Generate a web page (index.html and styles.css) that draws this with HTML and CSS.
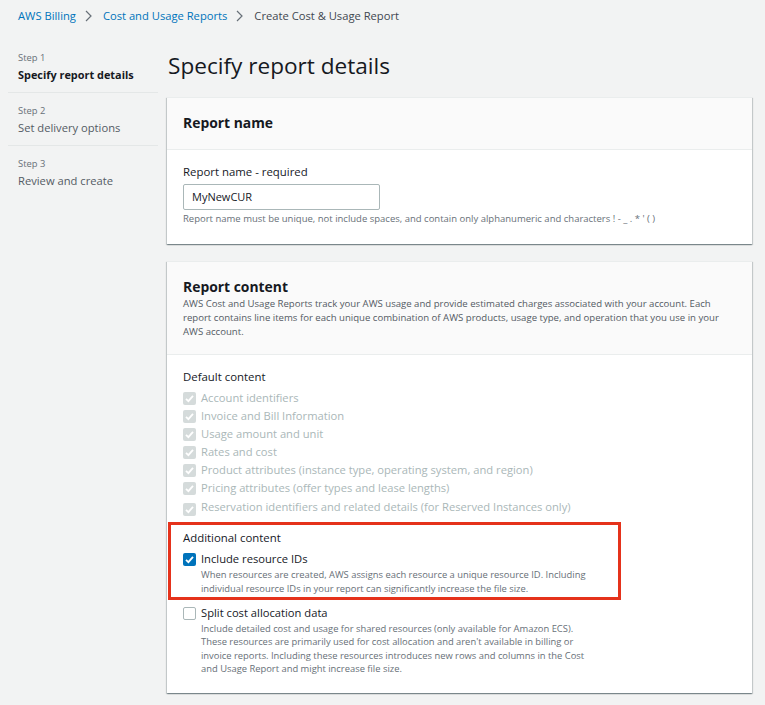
FILE: index.html
```html
<!DOCTYPE html>
<html>
<head>
<meta charset="utf-8">
<link rel="stylesheet" href="styles.css">
</head>
<body>
<nav class="crumbs">
  <a class="crumb-link">AWS Billing</a>
  <svg class="chev" width="7" height="12" viewBox="0 0 7 12"><polyline points="1,1 6,6 1,11" fill="none" stroke="#687078" stroke-width="1.2"/></svg>
  <a class="crumb-link">Cost and Usage Reports</a>
  <svg class="chev" width="7" height="12" viewBox="0 0 7 12"><polyline points="1,1 6,6 1,11" fill="none" stroke="#687078" stroke-width="1.2"/></svg>
  <span class="crumb-current">Create Cost &amp; Usage Report</span>
</nav>
<div class="layout">
  <aside class="steps">
    <div class="step">
      <div class="step-num">Step 1</div>
      <div class="step-name step-active">Specify report details</div>
    </div>
    <div class="step">
      <div class="step-num">Step 2</div>
      <div class="step-name">Set delivery options</div>
    </div>
    <div class="step step-last">
      <div class="step-num">Step 3</div>
      <div class="step-name">Review and create</div>
    </div>
  </aside>
  <main class="main">
    <h1 class="page-title">Specify report details</h1>

    <section class="card">
      <div class="card-head">
        <h2 class="card-title">Report name</h2>
      </div>
      <div class="card-body card-body-name">
        <div class="label">Report name - required</div>
        <div class="input">MyNewCUR</div>
        <div class="hint">Report name must be unique, not include spaces, and contain only alphanumeric and characters ! - _ . * ' ( )</div>
      </div>
    </section>

    <section class="card card-content">
      <div class="card-head">
        <h2 class="card-title">Report content</h2>
        <p class="card-desc">AWS Cost and Usage Reports track your AWS usage and provide estimated charges associated with your account. Each<br>report contains line items for each unique combination of AWS products, usage type, and operation that you use in your<br>AWS account.</p>
      </div>
      <div class="card-body card-body-content">
        <div class="label">Default content</div>
        <ul class="checks">
          <li class="check disabled"><span class="box box-disabled"><svg width="13" height="13" viewBox="0 0 13 13"><polyline points="3,6.8 5.4,9.2 10,3.8" fill="none" stroke="#fff" stroke-width="1.8"/></svg></span>Account identifiers</li>
          <li class="check disabled"><span class="box box-disabled"><svg width="13" height="13" viewBox="0 0 13 13"><polyline points="3,6.8 5.4,9.2 10,3.8" fill="none" stroke="#fff" stroke-width="1.8"/></svg></span>Invoice and Bill Information</li>
          <li class="check disabled"><span class="box box-disabled"><svg width="13" height="13" viewBox="0 0 13 13"><polyline points="3,6.8 5.4,9.2 10,3.8" fill="none" stroke="#fff" stroke-width="1.8"/></svg></span>Usage amount and unit</li>
          <li class="check disabled"><span class="box box-disabled"><svg width="13" height="13" viewBox="0 0 13 13"><polyline points="3,6.8 5.4,9.2 10,3.8" fill="none" stroke="#fff" stroke-width="1.8"/></svg></span>Rates and cost</li>
          <li class="check disabled"><span class="box box-disabled"><svg width="13" height="13" viewBox="0 0 13 13"><polyline points="3,6.8 5.4,9.2 10,3.8" fill="none" stroke="#fff" stroke-width="1.8"/></svg></span>Product attributes (instance type, operating system, and region)</li>
          <li class="check disabled"><span class="box box-disabled"><svg width="13" height="13" viewBox="0 0 13 13"><polyline points="3,6.8 5.4,9.2 10,3.8" fill="none" stroke="#fff" stroke-width="1.8"/></svg></span>Pricing attributes (offer types and lease lengths)</li>
          <li class="check disabled"><span class="box box-disabled"><svg width="13" height="13" viewBox="0 0 13 13"><polyline points="3,6.8 5.4,9.2 10,3.8" fill="none" stroke="#fff" stroke-width="1.8"/></svg></span>Reservation identifiers and related details (for Reserved Instances only)</li>
        </ul>

        <div class="highlight">
          <div class="label">Additional content</div>
          <div class="option option-ids">
            <div class="check"><span class="box box-checked"><svg width="13" height="13" viewBox="0 0 13 13"><polyline points="3,6.8 5.4,9.2 10,3.8" fill="none" stroke="#fff" stroke-width="1.8"/></svg></span>Include resource IDs</div>
            <div class="option-desc">When resources are created, AWS assigns each resource a unique resource ID. Including<br>individual resource IDs in your report can significantly increase the file size.</div>
          </div>
        </div>

        <div class="option option-split">
          <div class="check"><span class="box box-empty"></span>Split cost allocation data</div>
          <div class="option-desc option-desc-split">Include detailed cost and usage for shared resources (only available for Amazon ECS).<br>These resources are primarily used for cost allocation and aren't available in billing or<br>invoice reports. Including these resources introduces new rows and columns in the Cost<br>and Usage Report and might increase file size.</div>
        </div>
      </div>
    </section>
  </main>
</div>
</body>
</html>
```

FILE: styles.css
```css
* { box-sizing: border-box; }
html, body { margin: 0; padding: 0; }
body {
  background: #f2f3f3;
  font-family: "Open Sans", "Noto Sans", sans-serif;
  color: #16191f;
  width: 765px;
  height: 705px;
  overflow: hidden;
}
.crumbs {
  height: 40px;
  padding: 7px 0 0 18px;
  display: flex;
  align-items: flex-start;
  font-size: 11.2px;
  line-height: 18px;
}
.crumb-link { color: #0073bb; }
.crumb-current { color: #414750; }
.chev { margin: 3px 11px 0 9px; }

.layout {
  display: flex;
  align-items: flex-start;
}
.steps {
  width: 150px;
  margin-left: 8px;
  flex: none;
}
.step {
  padding: 10px 0 8px 10px;
  border-bottom: 1px solid #e4e7e7;
}
.step-last { border-bottom: none; }
.step-num {
  font-size: 9.4px;
  line-height: 16px;
  color: #687078;
}
.step-name {
  font-size: 11.2px;
  line-height: 18px;
  color: #545b64;
}
.step-active { font-weight: 700; font-size: 10.9px; color: #16191f; }

.main {
  margin-left: 9px;
  width: 585px;
  flex: none;
}
.page-title {
  margin: 11px 0 16px 1px;
  font-size: 22.6px;
  line-height: 30px;
  font-weight: 400;
  color: #16191f;
}
.card {
  background: #fff;
  box-shadow: 0 1px 1px 0 rgba(0,28,36,.3), 1px 1px 1px 0 rgba(0,28,36,.15), -1px 1px 1px 0 rgba(0,28,36,.15);
  border-top: 1px solid #eaeded;
}
.card-content { margin-top: 17px; }
.card-head {
  background: #fafafa;
  border-bottom: 1px solid #eaeded;
  padding: 15px 16px 16px 16px;
}
.card-content .card-head { padding-bottom: 15px; }
.card-title {
  margin: 0;
  font-size: 13.9px;
  line-height: 20px;
  font-weight: 700;
}
.card-desc {
  margin: 0;
  font-size: 9.6px;
  line-height: 14px;
  color: #545b64;
  white-space: nowrap;
}
.card-body { padding: 13px 16px 18px 16px; }
.card-body-content { padding-bottom: 18px; }
.label {
  font-size: 11.4px;
  line-height: 18px;
  color: #16191f;
}
.input {
  margin-top: 3px;
  width: 197px;
  height: 26px;
  border: 1px solid #aab7b8;
  border-radius: 2px;
  padding: 0 8px;
  font-size: 11px;
  line-height: 24px;
}
.hint {
  margin-top: 2px;
  font-size: 9.5px;
  line-height: 14px;
  color: #687078;
  white-space: nowrap;
}
.checks {
  list-style: none;
  margin: 3px 0 0 0;
  padding: 0;
}
.check {
  display: flex;
  align-items: center;
  font-size: 11.2px;
  line-height: 18px;
  height: 18px;
  white-space: nowrap;
}
.checks .check:last-child { height: 19px; align-items: flex-end; }
.disabled { color: #aab7b8; }
.box {
  width: 13px;
  height: 13px;
  border-radius: 2px;
  margin-right: 5px;
  flex: none;
  display: flex;
}
.box-disabled { background: #d5dbdb; }
.box-checked { background: #0073bb; }
.box-empty { border: 1px solid #aab7b8; background: #fff; }

.highlight {
  margin: 6px 0 0 -15px;
  width: 453px;
  border: 3px solid #e5321b;
  padding: 4px 12px 1px 12px;
}
.option-ids { margin-top: 3px; }
.option-desc {
  padding-left: 18px;
  font-size: 9.4px;
  line-height: 14px;
  color: #687078;
  white-space: nowrap;
}
.option-desc-split { line-height: 13.3px; }
.option-split { margin-top: 4px; }
```
